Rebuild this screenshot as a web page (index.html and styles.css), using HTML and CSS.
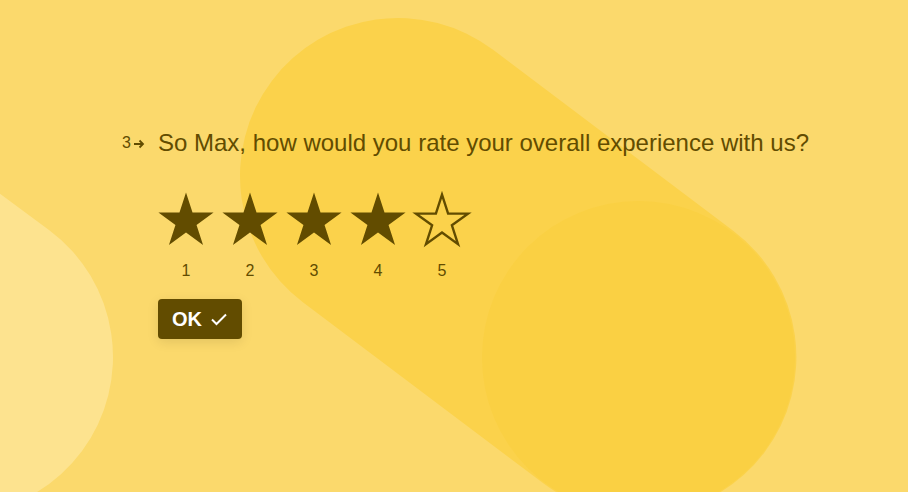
FILE: index.html
```html
<!DOCTYPE html>
<html>
<head>
<meta charset="utf-8">
<link rel="stylesheet" href="styles.css">
</head>
<body>
<div class="bg">
  <div class="shape pill-main"></div>
  <div class="shape pill-left"></div>
  <div class="shape circle"></div>
</div>
<main class="form">
  <div class="question">
    <div class="counter">
      <span class="num">3</span>
      <svg class="arrow" width="12" height="10" viewBox="0 0 12 10"><path d="M1 5h9M6.5 1.5 10 5 6.5 8.5" fill="none" stroke="currentColor" stroke-width="1.8"/></svg>
    </div>
    <div class="content">
      <h1 class="title">So Max, how would you rate your overall experience with us?</h1>
      <div class="rating">
        <div class="opt">
          <svg class="star" width="56" height="54" viewBox="0 0 56 54"><polygon points="28,0.5 34.51,20.54 55.58,20.54 38.54,32.92 45.05,52.96 28,40.58 10.95,52.96 17.46,32.92 0.42,20.54 21.49,20.54"/></svg>
          <span class="lbl">1</span>
        </div>
        <div class="opt">
          <svg class="star" width="56" height="54" viewBox="0 0 56 54"><polygon points="28,0.5 34.51,20.54 55.58,20.54 38.54,32.92 45.05,52.96 28,40.58 10.95,52.96 17.46,32.92 0.42,20.54 21.49,20.54"/></svg>
          <span class="lbl">2</span>
        </div>
        <div class="opt">
          <svg class="star" width="56" height="54" viewBox="0 0 56 54"><polygon points="28,0.5 34.51,20.54 55.58,20.54 38.54,32.92 45.05,52.96 28,40.58 10.95,52.96 17.46,32.92 0.42,20.54 21.49,20.54"/></svg>
          <span class="lbl">3</span>
        </div>
        <div class="opt">
          <svg class="star" width="56" height="54" viewBox="0 0 56 54"><polygon points="28,0.5 34.51,20.54 55.58,20.54 38.54,32.92 45.05,52.96 28,40.58 10.95,52.96 17.46,32.92 0.42,20.54 21.49,20.54"/></svg>
          <span class="lbl">4</span>
        </div>
        <div class="opt">
          <svg class="star empty" width="56" height="54" viewBox="0 0 56 54"><polygon points="28,2.6 34.1,21.6 54,21.6 37.9,33.3 44,52.1 28,40.5 12,52.1 18.1,33.3 2,21.6 21.9,21.6"/></svg>
          <span class="lbl">5</span>
        </div>
      </div>
      <button class="ok">OK
        <svg width="18" height="14" viewBox="0 0 18 14"><path d="M2 7.5 6.5 12 16 2.5" fill="none" stroke="#fff" stroke-width="2"/></svg>
      </button>
    </div>
  </div>
</main>
</body>
</html>
```
FILE: styles.css
```css
* { box-sizing: border-box; }
html, body { margin: 0; height: 100%; }
body {
  background: #fbd96c;
  font-family: "Liberation Sans", Arial, sans-serif;
  color: #624c00;
  overflow: hidden;
  position: relative;
  width: 908px;
  height: 492px;
}
.bg { position: absolute; inset: 0; overflow: hidden; }
.shape { position: absolute; }
.pill-main {
  left: 240px; top: 18px;
  width: 617px; height: 316px;
  border-radius: 158px;
  background: #fbd24b;
  transform-origin: 158px 158px;
  transform: rotate(37deg);
}
.pill-left {
  left: -887px; top: 199px;
  width: 1000px; height: 316px;
  border-radius: 158px;
  background: #fde38f;
  transform-origin: 842px 158px;
  transform: rotate(36.5deg);
}
.circle {
  left: 482px; top: 201px;
  width: 313px; height: 313px;
  border-radius: 50%;
  background: #fad043;
}
.form {
  position: relative;
  padding: 128px 0 0 122px;
}
.question { display: flex; }
.counter {
  width: 36px;
  display: flex;
  align-items: center;
  height: 30px;
  gap: 2px;
  font-size: 16px;
}
.arrow { margin-top: 1px; }
.content { display: flex; flex-direction: column; align-items: flex-start; }
.title {
  margin: 0;
  font-weight: 400;
  font-size: 24px;
  line-height: 30px;
}
.rating {
  display: flex;
  gap: 8px;
  margin-top: 34px;
}
.opt {
  width: 56px;
  display: flex;
  flex-direction: column;
  align-items: center;
}
.star { display: block; overflow: visible; }
.star polygon { fill: #624c00; }
.star.empty polygon { fill: none; stroke: #624c00; stroke-width: 2.4; }
.lbl {
  margin-top: 15px;
  font-size: 16px;
  line-height: 20px;
}
.ok {
  margin-top: 18px;
  height: 40px;
  width: 84px;
  border: 0;
  border-radius: 4px;
  background: #624c00;
  color: #fff;
  font-family: "Liberation Sans", Arial, sans-serif;
  font-weight: 700;
  font-size: 20px;
  display: flex;
  align-items: center;
  justify-content: center;
  gap: 8px;
  padding: 0 14px;
  box-shadow: 0 3px 12px rgba(0,0,0,0.1);
}
```
